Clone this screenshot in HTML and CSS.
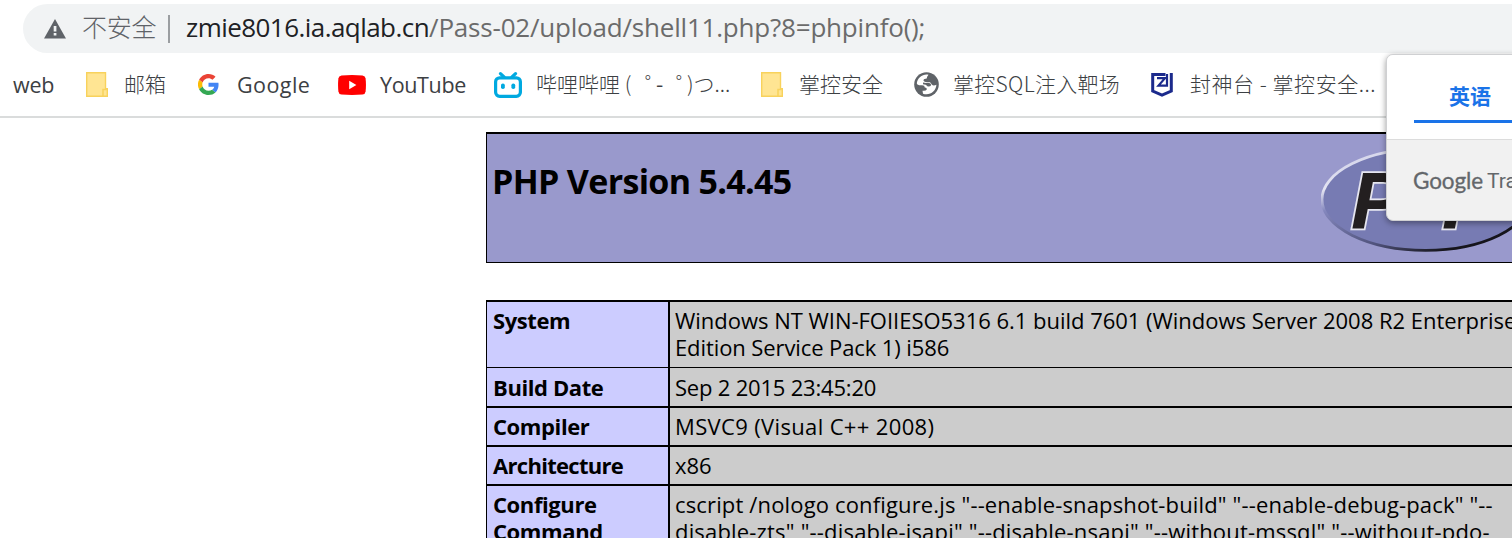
FILE: index.html
```
<!DOCTYPE html>
<html lang="zh-CN">
<head>
<meta charset="utf-8">
<title>phpinfo()</title>
<link rel="stylesheet" href="styles.css">
</head>
<body>
<header class="browser">
  <div class="omnibox">
    <svg class="warn" width="22" height="20" viewBox="0 0 22 20"><path d="M11 0L22 19.500H0Z" fill="#5f6368"/><path d="M9.700 7h2.700v5.500H9.700zM9.700 14h2.700v2.600H9.700z" fill="#f1f3f4"/></svg>
    <span class="insecure">不安全</span>
    <span class="divider"></span>
    <span class="url"><span class="host">zmie8016.ia.aqlab.cn</span><span class="path">/Pass-02/upload/shell11.php?8=phpinfo();</span></span>
  </div>
  <nav class="bookmarks">
    <a class="bm bm-web"><span class="label">web</span></a>
    <a class="bm bm-mail"><svg class="icon" width="22" height="25" viewBox="0 0 22 25"><path d="M.700.700h18.800v16h1.800v7.600H.700z" fill="#ffe593" stroke="#f8d25c" stroke-width="1.400"/><path d="M17 24v-6.500h3.500" fill="none" stroke="#f8d25c" stroke-width="1.500"/></svg><span class="label">邮箱</span></a>
    <a class="bm bm-google"><svg class="icon" width="21" height="21" viewBox="0 0 48 48"><path fill="#ea4335" d="M24 9.500c3.540 0 6.710 1.220 9.210 3.600l6.850-6.850C35.900 2.380 30.470 0 24 0 14.620 0 6.510 5.380 2.560 13.220l7.980 6.190C12.430 13.720 17.740 9.500 24 9.500z"/><path fill="#4285f4" d="M46.980 24.550c0-1.570-.15-3.090-.38-4.550H24v9.020h12.940c-.58 2.960-2.260 5.480-4.780 7.180l7.730 6c4.510-4.180 7.090-10.360 7.090-17.650z"/><path fill="#fbbc05" d="M10.530 28.590a14.500 14.500 0 0 1 0-9.180l-7.980-6.190a24 24 0 0 0 0 21.560z"/><path fill="#34a853" d="M24 48c6.480 0 11.930-2.130 15.890-5.810l-7.730-6c-2.150 1.450-4.920 2.300-8.160 2.300-6.260 0-11.570-4.220-13.470-9.910l-7.980 6.190C6.510 42.620 14.620 48 24 48z"/></svg><span class="label">Google</span></a>
    <a class="bm bm-youtube"><svg class="icon" width="28" height="20" viewBox="0 0 28 20"><path d="M3.500.500Q14-.300 24.500.500Q27.300.800 27.600 3.500Q28.300 10 27.600 16.500Q27.300 19.200 24.500 19.500Q14 20.300 3.500 19.500Q.700 19.200.400 16.500Q-.300 10 .400 3.500Q.700.800 3.500.500Z" fill="#f00"/><path d="M11.200 5.800L18.400 10L11.200 14.200Z" fill="#fff"/></svg><span class="label">YouTube</span></a>
    <a class="bm bm-bili"><svg class="icon" width="28" height="26" viewBox="0 0 28 26"><g fill="none" stroke="#00a9e0" stroke-width="3.200" stroke-linecap="round"><path d="M6.500 1.700L10 5M21.500 1.700L18 5"/><rect x="1.600" y="5.800" width="24.800" height="18.500" rx="4"/></g><rect x="7" y="11.500" width="3.800" height="5.500" rx="1.800" fill="#00a9e0"/><rect x="17.400" y="11.500" width="3.800" height="5.500" rx="1.800" fill="#00a9e0"/></svg><span class="label"><span class="open">哔哩哔哩 (</span><span class="face">゜</span><span class="dash">-</span><span class="face">゜</span><span>)つ...</span></span></a>
    <a class="bm bm-zk"><svg class="icon" width="22" height="25" viewBox="0 0 22 25"><path d="M.700.700h18.800v16h1.800v7.600H.700z" fill="#ffe593" stroke="#f8d25c" stroke-width="1.400"/><path d="M17 24v-6.500h3.500" fill="none" stroke="#f8d25c" stroke-width="1.500"/></svg><span class="label">掌控安全</span></a>
    <a class="bm bm-sql"><svg class="icon" width="25" height="25" viewBox="0 0 25 25"><circle cx="12.500" cy="12.500" r="12.300" fill="#5f6368"/><path d="M14.500 2.700C9 1.500 3.500 5.500 2.800 11.200C3 12.800 5 13.500 7.500 13.300Q10.800 13 10.800 15.500Q13 15.300 12.800 17.500Q11.500 19.300 8.500 18.700L9 21.700C15.500 24 22 19.500 22.400 12.800Q19.500 14.200 17.700 12.600Q16.800 9.500 14 10.200Q10.200 10.600 9.400 8.600Q9.500 6.500 12 6.800Q13.300 6.500 13 5Z" fill="#fff"/><path d="M9 10.600Q12 11.500 14.500 10.700Q17 11 17.200 13Q16.500 14.800 13.800 14.600Q12 12.300 9 12.300Z" fill="#5f6368"/></svg><span class="label">掌控SQL注入靶场</span></a>
    <a class="bm bm-fst"><svg class="icon" width="22" height="24" viewBox="0 0 22 24"><g fill="none" stroke="#1b2a8c"><path d="M14.500 1.500H1.700V18L11 22.200L20.300 18V0" stroke-width="3"/><path d="M6 5.200H14L7.500 12.600H16V1" stroke-width="2.200"/></g></svg><span class="label">封神台 - 掌控安全...</span></a>
  </nav>
</header>
<main class="page">
  <section class="banner">
    <h1>PHP Version 5.4.45</h1>
    <svg class="php-logo" width="208" height="106" viewBox="0 0 208 106">
      <defs>
        <linearGradient id="rim" x1=".1" y1="0" x2=".9" y2="1"><stop offset="0" stop-color="#c8c9e4"/><stop offset=".2" stop-color="#e4e4f2"/><stop offset=".33" stop-color="#8487bd"/><stop offset=".65" stop-color="#50537c"/><stop offset=".85" stop-color="#16151c"/></linearGradient>
      </defs>
      <ellipse cx="104.500" cy="52.500" rx="103.500" ry="50.800" fill="#777bb3" stroke="url(#rim)" stroke-width="2.800"/>
      <g class="php-word"><text x="30" y="81">P</text><text x="121" y="81">P</text></g>
    </svg>
  </section>
  <section class="info">
    <div class="key tall">System</div><div class="val tall"><p class="l1">Windows NT WIN-FOIIESO5316 6.1 build 7601 (Windows Server 2008 R2 Enterprise</p><p class="l2">Edition Service Pack 1) i586</p></div>
    <div class="key second">Build Date</div><div class="val second"><p class="date">Sep 2 2015 23:45:20</p></div>
    <div class="key">Compiler</div><div class="val"><p class="compiler">MSVC9 (Visual C++ 2008)</p></div>
    <div class="key arch">Architecture</div><div class="val"><p class="l2">x86</p></div>
    <div class="key last">Configure<br>Command</div><div class="val last"><p class="l3">cscript /nologo configure.js "--enable-snapshot-build" "--enable-debug-pack" "--</p><p class="l4">disable-zts" "--disable-isapi" "--disable-nsapi" "--without-mssql" "--without-pdo-</p></div>
  </section>
</main>
<aside class="translate">
  <div class="tabs"><span class="tab">英语</span></div>
  <div class="brand"><span class="g">Google</span><span class="t">Tra</span></div>
</aside>
</body>
</html>
```
FILE: styles.css
```
* { box-sizing: border-box; }
body {
  margin: 0;
  width: 1512px;
  height: 538px;
  overflow: hidden;
  position: relative;
  background: #fff;
  font-family: "Open Sans", "Noto Sans CJK SC", sans-serif;
}
.browser { height: 118px; border-bottom: 2px solid #dadcdc; padding-top: 4px; }
.omnibox {
  display: flex;
  align-items: center;
  height: 49px;
  margin-left: 23px;
  padding-left: 21px;
  border-radius: 25px 0 0 25px;
  background: #f1f3f4;
  white-space: nowrap;
}
.warn { flex: none; }
.insecure {
  width: 86px;
  height: 49px;
  margin-left: 16px;
  font: 300 25px/45px "Noto Sans CJK SC", sans-serif;
  letter-spacing: -.3px;
  color: #5f6368;
}
.divider { width: 2px; height: 28px; background: #9b9ea1; }
.url { height: 49px; margin-left: 16px; font-size: 26px; line-height: 47px; }
.host { color: #202124; letter-spacing: -.55px; }
.path { color: #6b6b6b; letter-spacing: -.2px; }
.bookmarks { display: flex; height: 63px; color: #3c4043; }
.bm { display: flex; align-items: center; flex: none; white-space: nowrap; }
.icon { flex: none; }
.label { font: 400 21.500px/60px "Open Sans", "Noto Sans CJK SC", sans-serif; }
.bm-web { width: 86px; padding-left: 13px; }
.bm-web .label { letter-spacing: -.2px; }
.bm-mail { width: 112px; gap: 16px; }
.bm-google { width: 140px; gap: 18px; }
.bm-google .label { letter-spacing: .45px; }
.bm-youtube { width: 156px; gap: 14px; }
.bm-youtube .label { letter-spacing: -.35px; }
.bm-bili { width: 267px; gap: 14px; }
.bm-zk { width: 153px; gap: 16px; }
.bm-sql { width: 237px; gap: 14px; }
.bm-fst { width: 230px; gap: 17px; }
.bm-mail .label, .bm-bili .label, .bm-zk .label, .bm-sql .label, .bm-fst .label {
  height: 60px;
  font-family: "Noto Sans CJK SC", sans-serif;
  font-size: 21px;
  font-weight: 300;
  line-height: 57px;
}
.bm-sql .label { letter-spacing: .3px; }
.bm-fst .label { letter-spacing: .55px; }
.bm-bili .label { display: flex; white-space: pre; }
.open { width: 98px; }
.face { width: 22px; padding-left: 11px; }
.dash { width: 9px; font-weight: 400; }
.page { padding: 14px 0 0 486px; color: #000; }
.banner {
  display: flex;
  justify-content: space-between;
  height: 131px;
  border: solid #000;
  border-width: 2px 0 1px 1px;
  background: #9999cc;
  padding-left: 5px;
}
.banner h1 {
  margin: 24px 0 0;
  font-size: 34px;
  line-height: 46px;
  font-weight: 700;
  letter-spacing: -.68px;
  white-space: nowrap;
}
.php-logo { flex: none; margin: 13px -17px 0 0; }
.php-word {
  font: italic 700 80px "Liberation Sans", sans-serif;
  fill: #231f20;
  stroke: #e6e6f0;
  stroke-width: 3.500px;
  paint-order: stroke;
}
.info {
  display: grid;
  grid-template-columns: 183px 842px;
  margin-top: 37px;
  border-left: 1px solid #000;
  font-size: 22px;
  line-height: 27px;
}
.info p { margin: 0; white-space: nowrap; }
.key, .val { height: 39px; border-top: 2px solid #000; padding: 5px 5px 0; }
.key { background: #ccccff; border-right: 2px solid #000; font-weight: 700; letter-spacing: -.4px; padding-left: 6px; }
.key.arch { letter-spacing: -.7px; }
.val { background: #cccccc; }
.key.tall, .val.tall { height: 68px; border-bottom: 1px solid #000; }
.key.second, .val.second { border-top: 0; height: 38px; padding-top: 6px; }
.key.last, .val.last { height: 60px; }
.info .l1 { letter-spacing: -.02px; }
.info .l2 { letter-spacing: -.1px; }
.info .l3 { letter-spacing: .15px; }
.info .l4 { letter-spacing: .18px; }
.info .date { letter-spacing: -.2px; }
.info .compiler { letter-spacing: .35px; }
.translate {
  position: absolute;
  left: 1386px;
  top: 54px;
  width: 140px;
  height: 167px;
  border-radius: 7px;
  border: 1px solid #cfd0d2;
  background: #f1f1f1;
  overflow: hidden;
  box-shadow: 0 2px 6px rgba(0, 0, 0, .4);
}
.tabs { height: 85px; padding: 19px 0 0 27px; background: #fff; border-bottom: 1px solid #dcdcdc; }
.tab {
  display: block;
  height: 49px;
  padding-left: 35px;
  border-bottom: 3px solid #1a73e8;
  font: 700 21px/43px "Noto Sans CJK SC", sans-serif;
  color: #1a73e8;
}
.brand {
  display: flex;
  gap: 4px;
  padding: 24px 0 0 26px;
  color: #63676b;
  font: 400 22.500px/34px Lato, sans-serif;
}
.g { letter-spacing: -.1px; -webkit-text-stroke: .3px #63676b; }
.t { font-family: Roboto, sans-serif; font-weight: 400; font-size: 21px; }
```
